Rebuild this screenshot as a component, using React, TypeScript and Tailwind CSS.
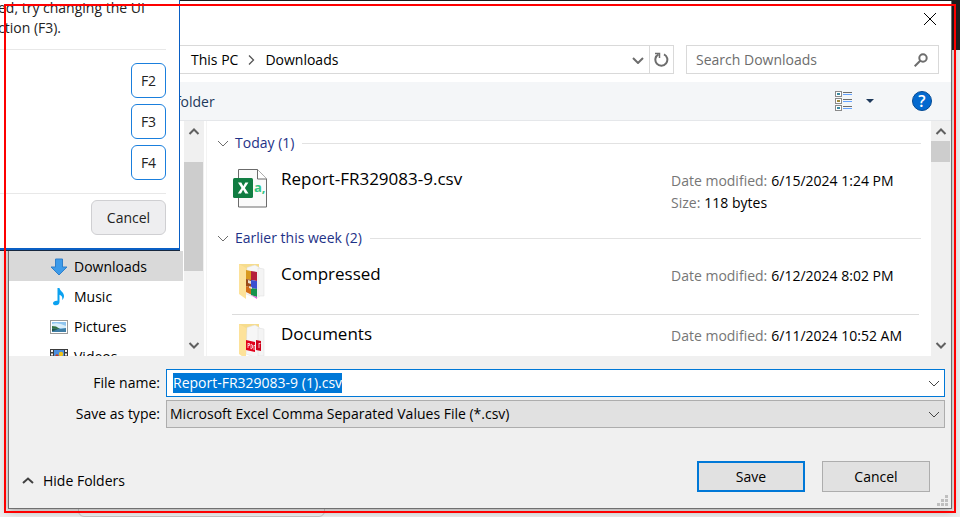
import { useEffect, useRef } from "react";
import type { ReactNode } from "react";

function Chevron({ className, d = "M1 1l5 5 5-5", stroke = 1 }: { className: string; d?: string; stroke?: number }) {
  return (
    <svg viewBox="0 0 12 7" fill="none" stroke="currentColor" strokeWidth={stroke} className={className} aria-hidden="true">
      <path d={d} />
    </svg>
  );
}

function ScrollBar({ track, thumb }: { track: string; thumb: string }) {
  return (
    <div className={`flex w-5 shrink-0 flex-col items-start bg-[#f0f0f0] pb-px text-[#606060] ${track}`}>
      <div className="flex h-5 w-[19px] shrink-0 items-center justify-center">
        <Chevron className="h-[7px] w-3" d="M1.5 6L6 1.5 10.500 6" stroke={2} />
      </div>
      <div className={`w-[19px] bg-[#cdcdcd] ${thumb}`} />
      <div className="mt-auto flex h-5 w-[19px] shrink-0 items-center justify-center">
        <Chevron className="h-[7px] w-3" d="M1.5 1L6 5.500 10.500 1" stroke={2} />
      </div>
    </div>
  );
}

function DownloadsIcon() {
  return (
    <svg viewBox="0 0 18 18" className="size-[18px]" aria-hidden="true">
      <path d="M5.500 1h7v8h4.500L9 17 1 9h4.500z" fill="#3d9be9" stroke="#2f7fca" strokeWidth="1" />
    </svg>
  );
}

function MusicIcon() {
  return (
    <svg viewBox="0 0 18 18" className="size-[18px]" aria-hidden="true">
      <path d="M7.500 0h2c.3 3 4.500 4.200 4.500 8 0 1.700-.7 3-1.800 4 .6-2.800-.5-4.600-2.700-5.200V14c0 2-1.700 3.300-3.600 3.300C4.200 17.300 3 16.500 3 15.200 3 13.600 5 12.500 7.500 12.800z" fill="#0ba1f0" />
    </svg>
  );
}

function PicturesIcon() {
  return (
    <svg viewBox="0 0 18 14" className="h-[14px] w-[18px]" aria-hidden="true">
      <rect x=".5" y=".5" width="17" height="13" fill="#fff" stroke="#9a9a9a" />
      <rect x="2" y="2" width="14" height="10" fill="#8fc4ee" />
      <path d="M2 4q6-2 14 2v2H2z" fill="#d8edfa" />
      <path d="M2 6l4 .5 4 2.500H2z" fill="#34713f" />
      <path d="M2 8.500l9 .5 5-1v4H2z" fill="#3f7ea6" />
      <path d="M2 9l6 .5-6 1.500z" fill="#1f4f3a" />
    </svg>
  );
}

function VideosIcon() {
  return (
    <svg viewBox="0 0 18 16" className="h-4 w-[18px]" aria-hidden="true">
      <path d="M0 0h18v16H0z" fill="#3b3b3b" />
      <path d="M1 1h2v2H1zM1 4.500h2v2H1zM1 8h2v2H1zM1 11.500h2v2H1zM15 1h2v2h-2zM15 4.500h2v2h-2zM15 8h2v2h-2zM15 11.500h2v2h-2z" fill="#f3f3f3" />
      <path d="M4 1h10v10H4z" fill="#4a8fe0" />
      <path d="M4 7h10v4H4z" fill="#31651e" />
      <circle cx="11" cy="5" r="2.200" fill="#f0c419" />
      <circle cx="7" cy="7" r="1.700" fill="#c23b22" />
      <path d="M10 7h2v3h-2z" fill="#e0a010" />
    </svg>
  );
}

function CsvIcon() {
  return (
    <svg viewBox="0 0 34 39" className="h-[39px] w-[34px]" aria-hidden="true">
      <path d="M5.500.5h19l9 9.500v28h-28z" fill="#fafafa" stroke="#6b6b6b" />
      <path d="M24.500.5V10h9" fill="#fff" stroke="#6b6b6b" />
      <rect x="0" y="9" width="20" height="20" rx="1.500" fill="#107c41" />
      <path d="M5 13.500h3.300l2 3.700 2-3.700h3.100l-3.500 5.500 3.600 5.500h-3.300l-2.100-3.800-2.100 3.800H4.800l3.700-5.500z" fill="#fff" />
      <text x="21" y="23" fontSize="13" fontWeight="700" fill="#33c481" fontFamily="Open Sans, sans-serif">a,</text>
    </svg>
  );
}

function FolderIcon({ kind }: { kind: "archive" | "pdf" }) {
  return (
    <svg viewBox="0 0 28 36" className="h-9 w-7" aria-hidden="true">
      <path d="M0 0h20v28H0z" fill="#f6dc8d" />
      <path d="M8 3.500l8-2.500 5 3v28l-3 2-11-4z" fill="#f6f6f6" stroke="#dedede" strokeWidth=".5" />
      <path d="M19 4l6 1v27h-6z" fill="#f4f4f4" stroke="#dcdcdc" strokeWidth=".5" />
      {kind === "archive" ? (
        <g>
          <path d="M7 6l5 1v9l-5-1z" fill="#d99a1e" />
          <path d="M12 7l6 1v9l-6-1z" fill="#b51f3c" />
          <path d="M7 15l6 1v8l-6-2z" fill="#9a4a18" />
          <path d="M12 16l6 1v8l-6-1z" fill="#3b4fd0" />
          <path d="M7 22l6 2v7l-6-3z" fill="#d36c17" />
          <path d="M12 24l6 1v8l-6-2z" fill="#15934c" />
          <path d="M9 16l3 1v3l-3-1zM10 22l3 1v2l-3-1z" fill="#e9dfd0" />
          <path d="M12 31l6 2v2z" fill="#e05bdc" />
        </g>
      ) : (
        <g>
          <path d="M17 16l5 1v10l-5-1z" fill="#d0021b" />
          <path d="M7 16l9 2v10l-9-2z" fill="#e2001a" />
          <path d="M9 19v5M9 19.500h1.500v2H9M12 20v5l1.500-1v-3zM15 21v5M15 21.500h1M20 19v5M20 19.500h1.500" fill="none" stroke="#fff" strokeWidth=".7" />
        </g>
      )}
      <path d="M0 0l7 4v31l-7-5z" fill="#fde29a" />
    </svg>
  );
}

function TreeItem({ icon, label, selected }: { icon: ReactNode; label: string; selected?: boolean }) {
  return (
    <li className={`flex h-[30px] shrink-0 items-center gap-1.5 pt-px pl-[41px] ${selected ? "bg-[#d9d9d9]" : ""}`}>
      <span className="flex w-[18px] justify-center">{icon}</span>
      <span>{label}</span>
    </li>
  );
}

function GroupHeading({ children }: { children: ReactNode }) {
  return (
    <div className="flex items-center gap-2 pr-2.5 pl-2.5 leading-5 text-[#1e3287]">
      <div className="flex items-center gap-1.5">
        <Chevron className="h-[7px] w-3 text-[#6d6d6d]" />
        <h2>{children}</h2>
      </div>
      <div className="h-px flex-1 bg-[#e2e2e2]" />
    </div>
  );
}

function FileRow({ icon, name, modified, size }: { icon: ReactNode; name: string; modified: string; size?: string }) {
  return (
    <div className="flex">
      <div className="flex w-[48px] shrink-0 justify-start">{icon}</div>
      <div className="flex-1 text-[17px] leading-6">{name}</div>
      <dl className="w-[248px] shrink-0 pt-[3px] leading-[22px] whitespace-nowrap">
        <div className="flex gap-1">
          <dt className="text-[#767676]">Date modified:</dt>
          <dd>{modified}</dd>
        </div>
        {size && (
          <div className="flex gap-1">
            <dt className="text-[#767676]">Size:</dt>
            <dd>{size}</dd>
          </div>
        )}
      </dl>
    </div>
  );
}

function ShortcutPanel() {
  return (
    <aside className="absolute top-0 left-0 z-10 flex h-[250px] w-[180px] flex-col border-r border-b-2 border-[#0a5fc4] bg-white pr-[13px] shadow-[0_1px_0_#17283f]">
      <p className="h-[50px] border-b border-[#e8e8e8] leading-5 whitespace-nowrap text-[#222]">
        <span className="-mt-0.5 -ml-0.5 block">ed, try changing the UI</span>
        <span className="-ml-0.5 block">ction (F3).</span>
      </p>
      <div className="flex flex-col items-end gap-1.5 pt-[13px] pb-[13px]">
        {["F2", "F3", "F4"].map((key) => (
          <button key={key} type="button" className="h-[35px] w-[35px] rounded-md border border-[#1a7fdd] bg-white text-[#222]">
            {key}
          </button>
        ))}
      </div>
      <div className="flex justify-end border-t border-[#e8e8e8] pt-1.5">
        <button type="button" className="h-[35px] w-[75px] rounded-md border border-[#cfcfd2] bg-[#eeeef0] text-[#222]">
          Cancel
        </button>
      </div>
    </aside>
  );
}

export default function App() {
  const nameRef = useRef<HTMLInputElement>(null);
  useEffect(() => {
    nameRef.current?.focus();
    nameRef.current?.select();
  }, []);

  return (
    <div className="relative flex h-screen flex-col overflow-hidden bg-[#ececec] pt-px pr-2 pb-2 pl-2 font-['Open_Sans','Noto_Sans',sans-serif] text-sm text-black">
      <div className="absolute inset-x-0 top-0 h-[50px] bg-[#1f1f1f]" />
      <div className="absolute bottom-0 left-[78px] h-3 w-[247px] rounded-b-md border border-[#c4c4c4] bg-[#efefef]" />
      <ShortcutPanel />

      <section aria-label="Save As" className="relative flex min-h-0 flex-1 flex-col border border-t-0 border-[#707070] bg-[#f0f0f0] shadow-[0_2px_8px_rgba(0,0,0,0.3)]">
        <div className="flex h-11 shrink-0 justify-end bg-white pt-3 pr-[15px]">
          <button type="button" aria-label="Close" className="h-3 w-3">
            <svg viewBox="0 0 12 12" className="size-3" stroke="#000" fill="none"><path d="M0 0l12 12M12 0L0 12" /></svg>
          </button>
        </div>

        <div className="flex shrink-0 gap-3 bg-white pr-3 pb-2 pl-[120px]">
          <div className="flex h-[29px] flex-1 items-center border border-[#d9d9d9] pl-[61px]">
            <span>This PC</span>
            <svg viewBox="0 0 7 10" className="mr-2.5 ml-2.5 h-2.5 w-[7px]" fill="none" stroke="#555"><path d="M1 .5l4.500 4.500L1 9.500" strokeWidth="1.300" /></svg>
            <span>Downloads</span>
            <button type="button" aria-label="Previous locations" className="ml-auto flex h-full w-[22px] items-center justify-center pt-0.5 text-[#6d6d6d]">
              <Chevron className="h-[7px] w-3" stroke={2} />
            </button>
            <button type="button" aria-label="Refresh" className="flex h-full w-6 items-center justify-center border-l border-[#d9d9d9]">
              <svg viewBox="0 0 15 15" className="size-[15px]" fill="none" stroke="#6d6d6d" strokeWidth="2">
                <path d="M10 2.300A6 6 0 1 1 4.500 2.400" />
                <path d="M1 1.500h4.500V6" strokeWidth="1.500" />
              </svg>
            </button>
          </div>
          <label className="flex h-[29px] w-[253px] items-center border border-[#d9d9d9] pr-2.5 pl-[9px]">
            <input type="search" aria-label="Search Downloads" placeholder="Search Downloads" className="min-w-0 flex-1 bg-transparent outline-none placeholder:text-[#6d6d6d]" />
            <svg viewBox="0 0 14 14" className="size-3.5" fill="none" stroke="#6d6d6d" strokeWidth="2">
              <circle cx="9" cy="5" r="3.700" /><path d="M6.500 7.500L.7 13.300" />
            </svg>
          </label>
        </div>

        <div className="flex h-[39px] shrink-0 items-center border-b border-[#e5e7ea] bg-[#f4f6f8] pr-[19px] pl-[134px]">
          <button type="button" className="pt-px text-[#1e395b]">New folder</button>
          <button type="button" aria-label="Change your view" className="ml-auto flex items-center gap-[14px]">
            <svg viewBox="0 0 17 20" className="h-5 w-[17px]" aria-hidden="true">
              {[0, 7, 14].map((y) => (
                <g key={y}>
                  <rect x=".5" y={y + 0.5} width="6" height="5" fill="#fff" stroke="#8a8a8a" />
                  <rect x="2" y={y + 2} width="3" height="2" fill={y === 7 ? "#a08a3c" : "#3c8aa0"} />
                  <path d={`M8 ${y + 1.5}h9`} stroke="#6d6d6d" />
                  <path d={`M8 ${y + 3.5}h9`} stroke="#66a3ff" />
                </g>
              ))}
            </svg>
            <svg viewBox="0 0 8 4" className="h-1 w-2" fill="#1e395b"><path d="M0 0h8L4 4z" /></svg>
          </button>
          <button type="button" aria-label="Help" className="ml-[38px] size-5 rounded-full border border-[#044a94] bg-[#0369cf] text-base leading-[18px] font-semibold text-white">?</button>
        </div>

        <div className="flex min-h-0 flex-1 overflow-hidden bg-white">
          <ul className="flex w-[174px] shrink-0 flex-col overflow-hidden pt-[130px]">
            <TreeItem icon={<DownloadsIcon />} label="Downloads" selected />
            <TreeItem icon={<MusicIcon />} label="Music" />
            <TreeItem icon={<PicturesIcon />} label="Pictures" />
            <TreeItem icon={<VideosIcon />} label="Videos" />
          </ul>
          <ScrollBar track="ml-px" thumb="mt-[21px] h-[109px]" />
          <div className="ml-0.5 min-w-0 flex-1 overflow-hidden border-l border-[#f3f3f3] pt-3">
            <GroupHeading>Today (1)</GroupHeading>
            <div className="mr-3 ml-[26px] h-[75px] pt-3.5">
              <FileRow icon={<div className="pt-0.5"><CsvIcon /></div>} name="Report-FR329083-9.csv" modified="6/15/2024 1:24 PM" size="118 bytes" />
            </div>
            <GroupHeading>Earlier this week (2)</GroupHeading>
            <div className="mr-3 ml-[25px] h-[67px] border-b border-[#dcdcdc] pt-3.5 pl-px">
              <FileRow icon={<div className="pt-0.5 pl-1.5"><FolderIcon kind="archive" /></div>} name="Compressed" modified="6/12/2024 8:02 PM" />
            </div>
            <div className="mr-3 ml-[26px] pt-[7px]">
              <FileRow icon={<div className="pt-0.5 pl-1.5"><FolderIcon kind="pdf" /></div>} name="Documents" modified="6/11/2024 10:52 AM" />
            </div>
          </div>
          <ScrollBar track="" thumb="h-[21px]" />
        </div>

        <form className="shrink-0 pt-[13px]" onSubmit={(e) => e.preventDefault()}>
          <div className="grid grid-cols-[151px_1fr] items-center gap-x-1.5 gap-y-[3px] pr-1.5">
            <label htmlFor="file-name" className="text-right">File name:</label>
            <div className="flex h-7 items-center border border-[#0078d7] bg-white pr-1 pl-1.5">
              <input id="file-name" ref={nameRef} defaultValue="Report-FR329083-9 (1).csv" className="h-5 min-w-0 flex-1 bg-transparent leading-5 outline-none selection:bg-[#0078d7] selection:text-white" />
              <button type="button" aria-label="Recent file names"><Chevron className="h-[7px] w-3 text-[#444]" /></button>
            </div>
            <label htmlFor="file-type" className="text-right">Save as type:</label>
            <div className="grid h-7 items-center border border-[#adadad] bg-[#e1e1e1] pr-1">
              <select id="file-type" className="col-start-1 row-start-1 appearance-none bg-transparent pl-[3px] outline-none">
                <option>Microsoft Excel Comma Separated Values File (*.csv)</option>
              </select>
              <Chevron className="pointer-events-none col-start-1 row-start-1 h-[7px] w-3 justify-self-end text-[#444]" />
            </div>
          </div>
          <div className="flex items-center pt-[33px] pr-[21px] pb-4 pl-[13px]">
            <button type="button" className="mt-2 flex items-center gap-[9px]">
              <Chevron className="h-[7px] w-3 text-[#404040]" d="M1 6l5-4.500L11 6" stroke={2} />
              Hide Folders
            </button>
            <button type="submit" className="ml-auto h-[31px] w-[108px] border-2 border-[#0078d7] bg-[#e1e1e1]">Save</button>
            <button type="button" className="ml-[17px] h-[31px] w-[108px] border border-[#adadad] bg-[#e1e1e1]">Cancel</button>
          </div>
        </form>
        <svg viewBox="0 0 11 11" className="absolute right-[3px] bottom-[2px] size-[11px]" fill="#bfbfbf" aria-hidden="true">
          <path d="M8 0h3v3H8zM4 4h3v3H4zM8 4h3v3H8zM0 8h3v3H0zM4 8h3v3H4zM8 8h3v3H8z" />
        </svg>
      </section>
      <div className="pointer-events-none absolute inset-1 z-20 border-2 border-[#fe0000]" />
    </div>
  );
}
